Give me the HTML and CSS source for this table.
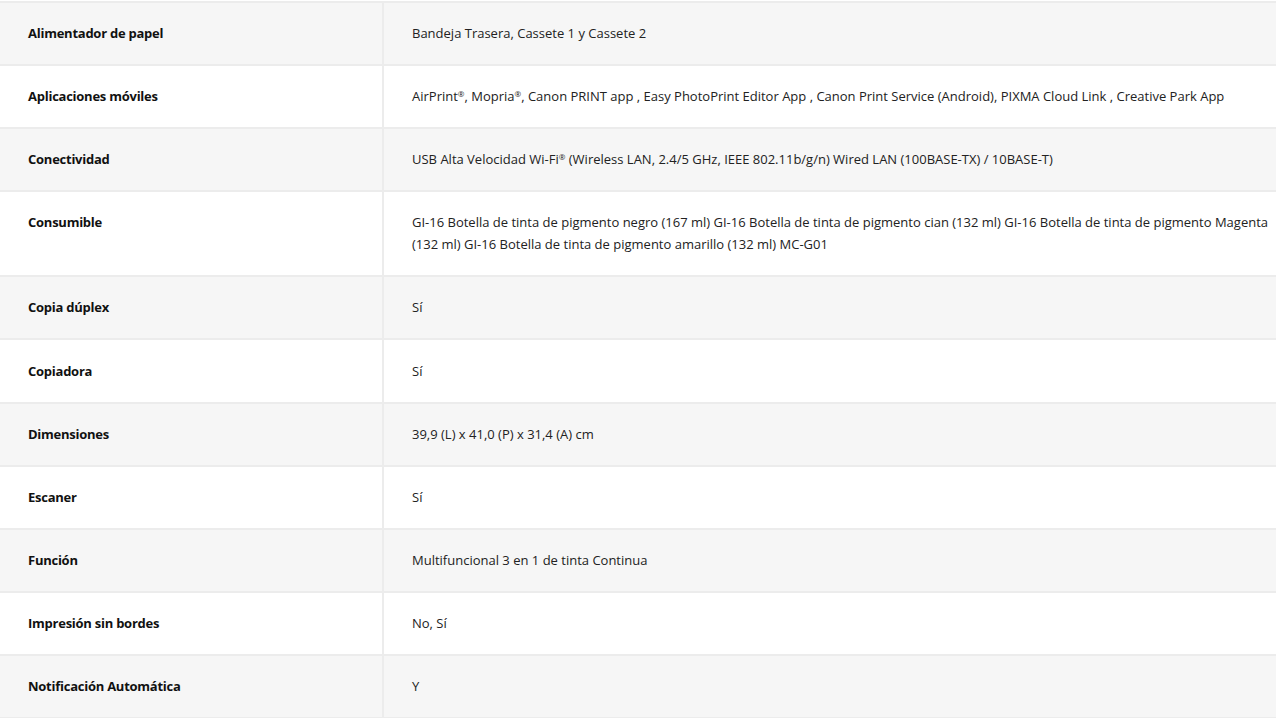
FILE: index.html
```html
<!DOCTYPE html>
<html lang="es">
<head>
    <meta charset="UTF-8">
    <meta name="viewport" content="width=device-width, initial-scale=1.0">
    <title>Especificaciones</title>
    <link rel="stylesheet" href="styles.css">
</head>
<body>
    <table class="spec-table">
        <tbody>
            <tr>
                <th>Alimentador de papel</th>
                <td>Bandeja Trasera, Cassete 1 y Cassete 2</td>
            </tr>
            <tr>
                <th>Aplicaciones móviles</th>
                <td>AirPrint<sup>®</sup>, Mopria<sup>®</sup>, Canon PRINT app , Easy PhotoPrint Editor App , Canon Print Service (Android), PIXMA Cloud Link , Creative Park App</td>
            </tr>
            <tr>
                <th>Conectividad</th>
                <td>USB Alta Velocidad Wi-Fi<sup>®</sup> (Wireless LAN, 2.4/5 GHz, IEEE 802.11b/g/n) Wired LAN (100BASE-TX) / 10BASE-T)</td>
            </tr>
            <tr>
                <th>Consumible</th>
                <td>GI-16 Botella de tinta de pigmento negro (167 ml) GI-16 Botella de tinta de pigmento cian (132 ml) GI-16 Botella de tinta de pigmento Magenta (132 ml) GI-16 Botella de tinta de pigmento amarillo (132 ml) MC-G01</td>
            </tr>
            <tr>
                <th>Copia dúplex</th>
                <td>Sí</td>
            </tr>
            <tr>
                <th>Copiadora</th>
                <td>Sí</td>
            </tr>
            <tr>
                <th>Dimensiones</th>
                <td>39,9 (L) x 41,0 (P) x 31,4 (A) cm</td>
            </tr>
            <tr>
                <th>Escaner</th>
                <td>Sí</td>
            </tr>
            <tr>
                <th>Función</th>
                <td>Multifuncional 3 en 1 de tinta Continua</td>
            </tr>
            <tr>
                <th>Impresión sin bordes</th>
                <td>No, Sí</td>
            </tr>
            <tr>
                <th>Notificación Automática</th>
                <td>Y</td>
            </tr>
        </tbody>
    </table>
</body>
</html>
```

FILE: styles.css
```css
* {
    margin: 0;
    padding: 0;
    box-sizing: border-box;
}

body {
    font-family: 'Open Sans', 'Liberation Sans', sans-serif;
    background: #fff;
    color: #1a1a1a;
    padding-top: 1px;
}

.spec-table {
    width: 100%;
    border-collapse: collapse;
    font-size: 13px;
    line-height: 22px;
}

.spec-table tr:nth-child(odd) {
    background: #f6f6f6;
}

.spec-table th,
.spec-table td {
    border: 2px solid #ececec;
    padding: 19.1px 28px 20px;
    vertical-align: top;
    text-align: left;
}

.spec-table th {
    width: 383px;
    font-weight: 700;
    color: #111;
    letter-spacing: -0.25px;
    border-left: none;
}

.spec-table td {
    font-weight: 400;
    color: #222;
    padding-right: 4px;
    border-right: none;
}

.spec-table sup {
    font-size: 8px;
    line-height: 0;
    vertical-align: 4px;
}
```
